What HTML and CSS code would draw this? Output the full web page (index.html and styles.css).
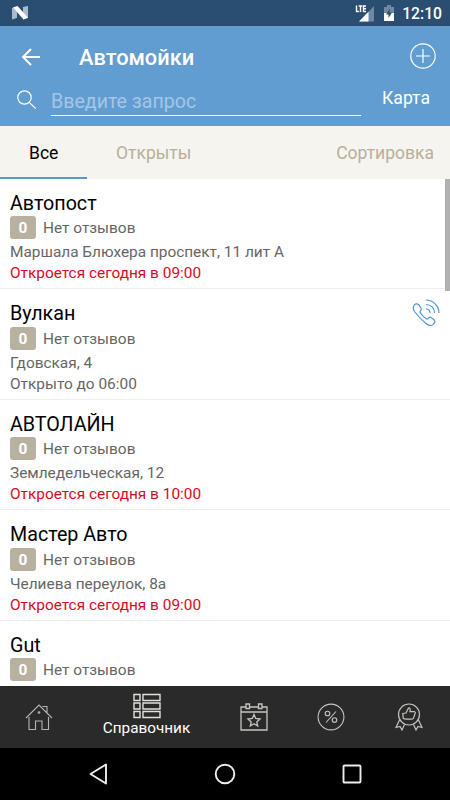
FILE: index.html
```html
<!DOCTYPE html>
<html lang="ru">
<head>
  <meta charset="UTF-8" />
  <meta name="viewport" content="width=device-width, initial-scale=1.0" />
  <title>Автомойки</title>
  <link rel="stylesheet" href="styles.css">
</head>
<body>
  <div class="screen">
    <div class="status-bar">
      <svg class="logo" width="17" height="14" viewBox="0 0 17 14">
        <path d="M0 2L5 .5V12L0 13.500zM11 1L16 0V12L11 13.500z" fill="#a9bac9"/>
        <path d="M1 1.500L5.500 0L16 11.500L11.500 13.500z" fill="#fff"/>
      </svg>
      <div class="status-icons">
        <svg width="20" height="18" viewBox="0 0 20 18">
          <path d="M19 2V17.500H4z" fill="#6f89a3"/>
          <path d="M13.500 7.700V17.500H4z" fill="#fff"/>
          <path d="M1.500 1.500V7.500H4M3.700 2H7.300M5.500 2V8M11 2H8.500V7.500H11M8.500 4.700H11" fill="none" stroke="#fff" stroke-width="1.400"/>
        </svg>
        <svg class="battery" width="10" height="16" viewBox="0 0 10 16">
          <path d="M3 0H7V2H10V8H0V2H3z" fill="#6f89a3"/>
          <path d="M0 8H10V16H0z" fill="#fff"/>
          <path d="M6 3.500L2 9.500H4.500V13L8 7.500H5.500z" fill="#294e72"/>
        </svg>
        <span class="time">12:10</span>
      </div>
    </div>

    <div class="header">
      <div class="title-row">
        <svg class="back" width="20" height="18" viewBox="0 0 20 18">
          <path d="M10 1L2 9L10 17M2 9H19" fill="none" stroke="#fff" stroke-width="1.900"/>
        </svg>
        <h1>Автомойки</h1>
        <svg class="add" width="26" height="26" viewBox="0 0 26 26">
          <g fill="none" stroke="#fff" stroke-width="1.200">
            <circle cx="13" cy="13" r="12.200"/>
            <path d="M13 6V20M6 13H20"/>
          </g>
        </svg>
      </div>
      <div class="search-row">
        <svg class="search-icon" width="20" height="20" viewBox="0 0 20 20">
          <g fill="none" stroke="#fff" stroke-width="1.200">
            <circle cx="7.500" cy="7.500" r="6.700"/>
            <path d="M12.300 12.300L18.700 18.700"/>
          </g>
        </svg>
        <div class="search-field">Введите запрос</div>
        <div class="map-link">Карта</div>
      </div>
    </div>

    <div class="tabs">
      <div class="tab active">Все</div>
      <div class="tab">Открыты</div>
      <div class="sort">Сортировка</div>
    </div>

    <div class="list">
      <div class="item">
        <div class="name">Автопост</div>
        <div class="rating"><span class="badge">0</span>Нет отзывов</div>
        <div class="address">Маршала Блюхера проспект, 11 лит А</div>
        <div class="hours closed">Откроется сегодня в 09:00</div>
      </div>
      <div class="item">
        <div class="name">Вулкан</div>
        <div class="rating"><span class="badge">0</span>Нет отзывов</div>
        <div class="address">Гдовская, 4</div>
        <div class="hours">Открыто до 06:00</div>
        <svg class="call" width="28" height="28" viewBox="0 0 28 28">
          <g fill="none" stroke="#4f94d2" stroke-width="1.200">
            <path d="M2 6.500C2.800 5 4.800 4.200 6.500 5.500L9 9C9.900 11 8.300 12 7.800 13C9.500 16 12.200 18.500 15 20.300C16.300 19.500 17.200 17.500 19 18.400L22.300 21C23.500 22.500 22.500 24 21.500 25C19.500 27.500 16.500 26.500 14 24.500C9.500 21 5.500 16.500 2.500 12.500C1.200 10.500.8 8.500 2 6.500z"/>
            <path d="M14 1C21 1 27 7 27 14M14 5.500C19 5.500 22.500 9 22.500 14M14 10C16.500 10 18 11.500 18 14"/>
          </g>
        </svg>
      </div>
      <div class="item">
        <div class="name">АВТОЛАЙН</div>
        <div class="rating"><span class="badge">0</span>Нет отзывов</div>
        <div class="address">Земледельческая, 12</div>
        <div class="hours closed">Откроется сегодня в 10:00</div>
      </div>
      <div class="item">
        <div class="name">Мастер Авто</div>
        <div class="rating"><span class="badge">0</span>Нет отзывов</div>
        <div class="address">Челиева переулок, 8а</div>
        <div class="hours closed">Откроется сегодня в 09:00</div>
      </div>
      <div class="item">
        <div class="name">Gut</div>
        <div class="rating"><span class="badge">0</span>Нет отзывов</div>
      </div>
      <div class="scrollbar"></div>
    </div>

    <div class="bottom-menu">
      <div class="menu-item">
        <svg width="28" height="28" viewBox="0 0 28 28">
          <g fill="none" stroke="#b5b5b5" stroke-width="1.100">
            <path d="M1 15L14 2L27 15M17.500 3.500H22V9.500M4 14V26.500H10.500V18H17V26.500H23.500V14"/>
            <circle cx="14" cy="9.500" r=".8"/>
          </g>
        </svg>
      </div>
      <div class="menu-item current">
        <svg width="28" height="26" viewBox="0 0 28 26">
          <path d="M1 1.500H7V7.500H1zM10 1.500H27V7.500H10zM1 10H7V16H1zM10 10H27V16H10zM1 18.500H7V24.500H1zM10 18.500H27V24.500H10z" fill="none" stroke="#e0e2dc" stroke-width="1.400"/>
        </svg>
        <span>Справочник</span>
      </div>
      <div class="menu-item">
        <svg width="28" height="28" viewBox="0 0 28 28">
          <g fill="none" stroke="#c5c5c0" stroke-width="1.300">
            <path d="M6 4H1V27H27V4H22M10 4H18M1 9H27M6 1H9.500V5.500H6zM18.500 1H22V5.500H18.500z"/>
            <path d="M14 11.500L15.700 15.500L20 16L16.800 18.900L17.700 23L14 20.800L10.300 23L11.200 18.900L8 16L12.300 15.500z"/>
          </g>
        </svg>
      </div>
      <div class="menu-item">
        <svg width="28" height="28" viewBox="0 0 28 28">
          <g fill="none" stroke="#c5c5c0" stroke-width="1.100">
            <circle cx="14" cy="14" r="12.900"/>
            <circle cx="10.500" cy="10.500" r="2.300"/>
            <circle cx="17.500" cy="17" r="2.300"/>
            <path d="M19 8.500L9 19.500"/>
          </g>
        </svg>
      </div>
      <div class="menu-item">
        <svg width="28" height="28" viewBox="0 0 28 28">
          <g fill="none" stroke="#c5c5c0" stroke-width="1.200">
            <circle cx="14" cy="11.500" r="10.500"/>
            <path d="M7.800 10.500L11 10L13.500 5C15 4.500 15.500 6 15 8.700H19.500C20.500 9 20.500 10 20 10.800L18.500 15C18 16 17 16.200 16 16.200H11L8.300 15.500z"/>
            <path d="M4.500 17L1 24.500L5 23.500L7 27L9.500 21.500M23.500 17L27 24.500L23 23.500L21 27L18.500 21.500"/>
          </g>
        </svg>
      </div>
    </div>

    <div class="nav-bar">
      <svg width="20" height="22" viewBox="0 0 20 22"><path d="M18 1.500V20.500L2.500 11z"/></svg>
      <svg width="22" height="22" viewBox="0 0 22 22"><circle cx="11" cy="11" r="9.300"/></svg>
      <svg width="20" height="20" viewBox="0 0 20 20"><rect x="1.500" y="1.500" width="17" height="17" rx="1"/></svg>
    </div>
  </div>
</body>
</html>
```

FILE: styles.css
```css
* {
  box-sizing: border-box;
}

body {
  margin: 0;
  font-family: Roboto, "Noto Sans", sans-serif;
  background: #fff;
}

svg {
  display: block;
  flex-shrink: 0;
}

.screen {
  width: 450px;
  height: 800px;
  display: flex;
  flex-direction: column;
  overflow: hidden;
}

/* status bar */
.status-bar {
  height: 26px;
  flex-shrink: 0;
  padding: 0 8px 0 12px;
  display: flex;
  justify-content: space-between;
  align-items: center;
  background: #294e72;
  color: #fff;
}

.status-icons {
  display: flex;
  align-items: center;
}

.battery {
  margin: 0 8px 0 9px;
}

.time {
  font-size: 15.7px;
  font-weight: 500;
  line-height: 26px;
  padding-top: 2px;
}

/* header */
.header {
  height: 100px;
  flex-shrink: 0;
  background: #629dd1;
  color: #fff;
}

.title-row {
  height: 60px;
  padding: 0 14px 0 21px;
  display: flex;
  align-items: center;
}

.back {
  margin-top: 2px;
}

h1 {
  flex: 1;
  margin: 4px 0 0 38px;
  font-size: 21.8px;
  font-weight: 500;
  line-height: 26px;
}

.search-row {
  display: flex;
  align-items: flex-start;
  padding: 0 20px 0 17px;
}

.search-icon {
  margin-top: 4px;
}

.search-field {
  width: 310px;
  height: 30px;
  margin-left: 14px;
  border-bottom: 1px solid #fff;
  font-size: 19.6px;
  line-height: 31px;
  color: #a4c6e5;
}

.map-link {
  margin-left: auto;
  font-size: 17.6px;
  line-height: 24px;
}

/* tabs */
.tabs {
  height: 53px;
  flex-shrink: 0;
  display: flex;
  background: #f6f4ee;
  color: #b8af9b;
  font-size: 17.5px;
  line-height: 55px;
}

.tab {
  padding: 0 29px;
}

.tab.active {
  width: 87px;
  color: #000;
  border-bottom: 2px solid #5399d3;
}

.sort {
  margin-left: auto;
  padding-right: 16px;
}

/* list */
.list {
  position: relative;
  flex: 1;
  min-height: 0;
  overflow: hidden;
  background: #fff;
}

.item {
  position: relative;
  height: 110.4px;
  padding: 13px 10px 0;
  border-bottom: 1px solid #f0efeb;
  color: #666;
  font-size: 15.4px;
}

.name {
  color: #000;
  font-size: 19.7px;
  line-height: 24.4px;
}

.rating {
  display: flex;
  align-items: flex-start;
  height: 23px;
  line-height: 25px;
}

.badge {
  width: 26px;
  height: 23px;
  margin-right: 7px;
  border-radius: 3px;
  background: #b9b19f;
  color: #fff;
  font-weight: 700;
  line-height: 24px;
  text-align: center;
}

.address {
  margin-top: 3px;
  line-height: 21px;
}

.hours {
  line-height: 21px;
}

.closed {
  color: #dc0824;
}

.call {
  position: absolute;
  top: 10px;
  right: 10px;
}

.scrollbar {
  position: absolute;
  top: 0;
  right: 0;
  width: 5px;
  height: 112px;
  background: #b1b1b1;
}

/* bottom menu */
.bottom-menu {
  height: 62px;
  flex-shrink: 0;
  display: grid;
  grid-template-columns: 78px 137px 77px 78px 78px;
  background: #2a2a2a;
}

.menu-item {
  display: flex;
  flex-direction: column;
  align-items: center;
  justify-content: center;
}

.menu-item.current {
  justify-content: flex-start;
  padding-top: 7px;
  color: #fff;
  font-size: 15.3px;
  line-height: 18px;
}

/* system buttons */
.nav-bar {
  height: 52px;
  flex-shrink: 0;
  display: flex;
  align-items: center;
  justify-content: space-between;
  padding: 0 88px;
  background: #000;
}

.nav-bar svg {
  fill: none;
  stroke: #eee;
  stroke-width: 1.9;
  stroke-linejoin: round;
}
```
